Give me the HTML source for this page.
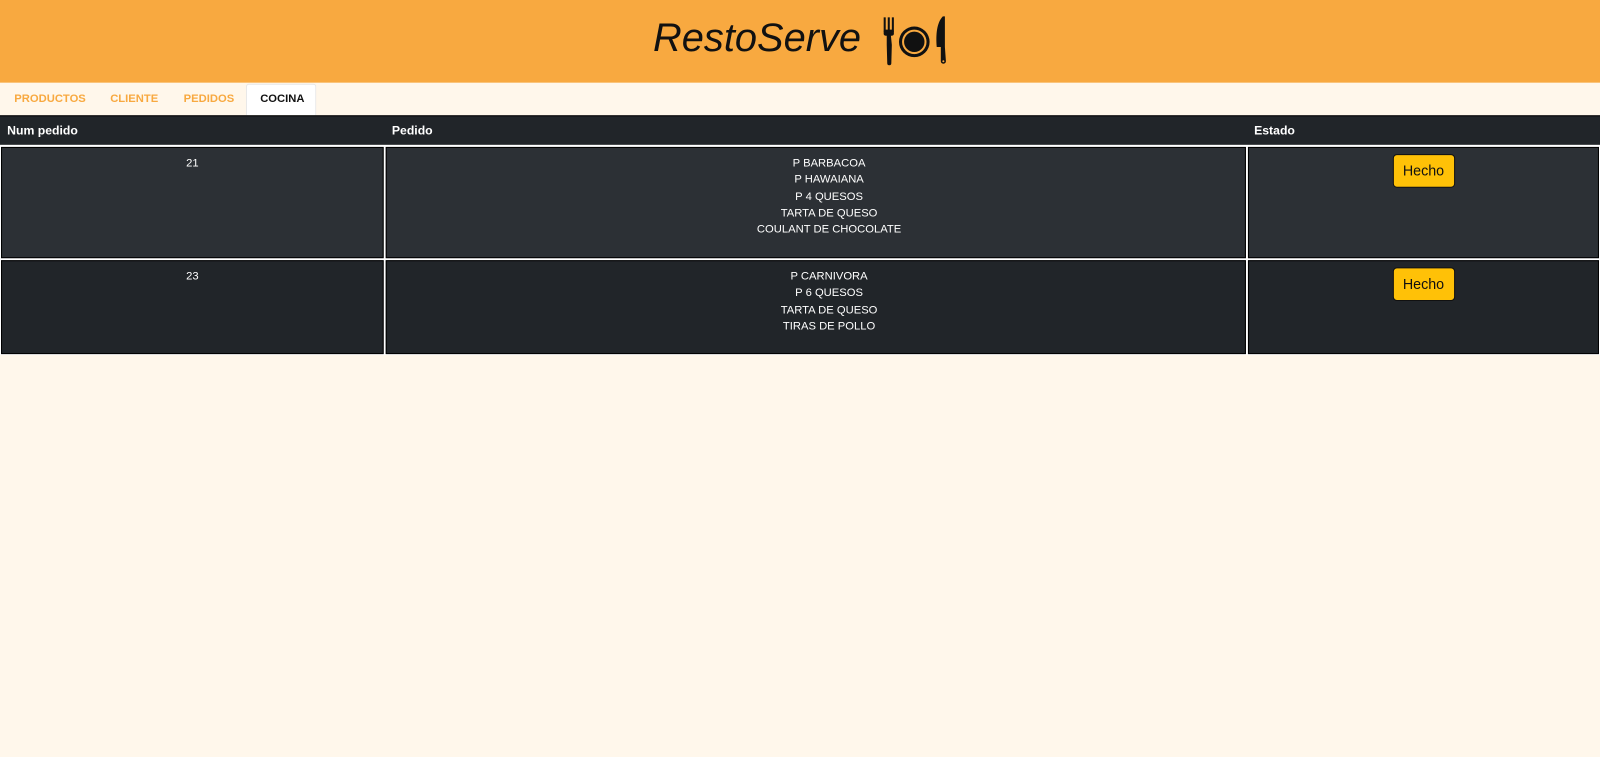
<!DOCTYPE html>
<html><head><meta charset="utf-8"><style>
*{margin:0;padding:0;box-sizing:border-box}
body{width:1600px;height:757px;background:#fff7eb;font-family:"Liberation Sans",Arial,sans-serif;overflow:hidden}
#w{position:relative;width:1568px;height:742px;transform:scale(1.020408);transform-origin:0 0}
.hdr{position:absolute;left:0;top:0;width:1568px;height:81px;background:#f8a940}
.logo{position:absolute;left:640px;top:16px;font-size:39px;font-style:italic;color:#111}
.tab{position:absolute;top:81px;height:32px;line-height:32px;font-size:11px;font-weight:bold;color:#f8a940}
.th{position:absolute;left:0;top:113px;width:1568px;height:29px;background:#212529;border-top:1px solid #000}
.th span{position:absolute;top:7px;font-size:12px;font-weight:bold;color:#fff}
.c{position:absolute;border:1px solid #000;color:#fff;font-size:11px;text-align:center;line-height:16.3px;padding-top:7px}
.p{padding-left:26px}
.r1{background:#2c3035}.r2{background:#212529}
.btn{display:inline-block;width:61px;height:33px;line-height:31px;background:#ffc107;border:1px solid #111;border-radius:4px;color:#111;font-size:14px;margin-top:-1px}
.wb{position:absolute;background:#fff}
</style></head><body><div id="w">
<div class="hdr"><div class="logo">RestoServe</div>
<svg style="position:absolute;left:862px;top:14px" width="70" height="54" viewBox="0 0 70 54">
<g fill="#111">
<rect x="4" y="3" width="2" height="14"/><rect x="8" y="3" width="2" height="14"/><rect x="12" y="3" width="2" height="14"/>
<rect x="4" y="15" width="10" height="6" rx="2"/><path d="M7 20h4l1 10-0.5 18a2 2 0 0 1-4 0L7 30z"/>
<circle cx="34" cy="27" r="15"/><circle cx="34" cy="27" r="12" fill="#f8a940"/><circle cx="34" cy="27" r="10"/>
<path d="M62 2 C56 8 55 20 56 32 L60 32 L60 46 a2.5 2.5 0 0 0 5 0 L64 32 L64 2z"/>
</g><circle cx="62.5" cy="46" r="1" fill="#f8a940"/></svg>
</div>
<div style="position:absolute;left:241px;top:82px;width:69px;height:31px;background:#fff;border:1px solid #e6e6e6;border-bottom:none;border-radius:3px 3px 0 0"></div>
<div class="tab" style="left:14px">PRODUCTOS</div>
<div class="tab" style="left:108px">CLIENTE</div>
<div class="tab" style="left:180px">PEDIDOS</div>
<div class="tab" style="left:255px;color:#111">COCINA</div>
<div class="th"><span style="left:7px">Num pedido</span><span style="left:384px">Pedido</span><span style="left:1229px">Estado</span></div>
<div class="wb" style="left:0;top:142px;width:1568px;height:206px"></div>
<div class="c r1" style="left:1px;top:144px;width:375px;height:109px">21</div>
<div class="c r1 p" style="left:378px;top:144px;width:843px;height:109px">P BARBACOA<br>P HAWAIANA<br>P 4 QUESOS<br>TARTA DE QUESO<br>COULANT DE CHOCOLATE</div>
<div class="c r1" style="left:1223px;top:144px;width:344px;height:109px"><span class="btn">Hecho</span></div>
<div class="c r2" style="left:1px;top:255px;width:375px;height:92px">23</div>
<div class="c r2 p" style="left:378px;top:255px;width:843px;height:92px">P CARNIVORA<br>P 6 QUESOS<br>TARTA DE QUESO<br>TIRAS DE POLLO</div>
<div class="c r2" style="left:1223px;top:255px;width:344px;height:92px"><span class="btn">Hecho</span></div>
</div></body></html>
